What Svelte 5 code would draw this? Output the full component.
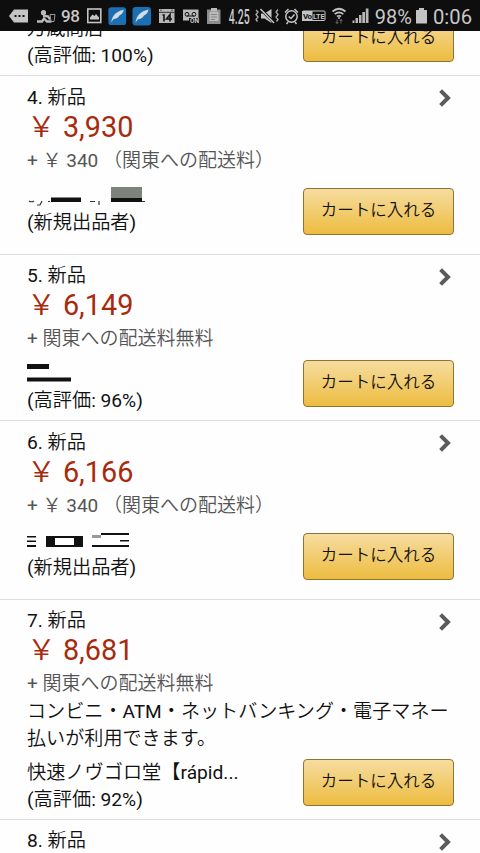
<script lang="ts">
  type Offer = {
    id: number;
    price: string;
    shipping: string;
    note?: string;
    seller?: string;
    mask?: "a" | "b" | "c";
    rating: string;
    fresh?: boolean;
  };

  const paid = "+ ￥ 340 （関東への配送料）";
  const free = "+ 関東への配送料無料";

  const offers: Offer[] = [
    { id: 4, price: "3,930", shipping: paid, mask: "a", rating: "(新規出品者)", fresh: true },
    { id: 5, price: "6,149", shipping: free, mask: "b", rating: "(高評価: 96%)" },
    { id: 6, price: "6,166", shipping: paid, mask: "c", rating: "(新規出品者)", fresh: true },
    {
      id: 7,
      price: "8,681",
      shipping: free,
      note: "コンビニ・ATM・ネットバンキング・電子マネー払いが利用できます。",
      seller: "快速ノヴゴロ堂【rápid...",
      rating: "(高評価: 92%)",
    },
  ];
</script>

{#snippet chevron()}
  <svg class="chevron" viewBox="0 0 14 20" width="14" height="20">
    <path d="M2.6 2.6 10 10 2.6 17.4" />
  </svg>
{/snippet}

{#snippet feather(x: number)}
  <svg viewBox="{x} 0 25 31">
    <rect x={x + 3.5} y="7" width="18.5" height="18.5" rx="3" fill="#1d6fb4" />
    <path d="M{x + 6.5} 22.500c1-6 4-11 13-13-.5 3-2 5-4.500 6-1 2.500-3.500 3.500-6 3.700z" fill="#d3dce3" />
  </svg>
{/snippet}

<div class="phone">
  <header class="status">
    <svg viewBox="0 0 33 31">
      <path d="M9 16l5-6.500h14v13H14z" fill="#c4c4c4" />
      <path d="M14.500 16h2M18.500 16h2M22.500 16h2" stroke="#111" stroke-width="2" />
    </svg>
    <svg viewBox="33 0 25 31">
      <circle cx="43.500" cy="12.700" r="2.600" fill="#bbb" />
      <path d="M37 21.500h5l2-3 3 3h4.500M43 16l5 .3 2 3" stroke="#bbb" stroke-width="2.300" fill="none" />
      <path d="M50 14.500h5l-1 7h-3z" fill="none" stroke="#999" />
    </svg>
    <svg viewBox="58 0 25 31"><text x="61" y="22" font-size="17" font-weight="500" textLength="19">98</text></svg>
    <svg viewBox="83 0 22 31">
      <rect x="87.800" y="9" width="13" height="13.500" fill="none" stroke="#c4c4c4" stroke-width="1.600" />
      <path d="M90 19.500v-2l2.500-3 2 1.500 1.500-2 3 3.500v2z" fill="#c4c4c4" />
    </svg>
    {@render feather(105)}
    {@render feather(129)}
    <svg viewBox="154 0 24 31">
      <path d="M159 9h15.500v14H159z" fill="#b8b8b8" />
      <path d="M161 9.500v1.500M172 9.500v1.500M159 12.300h15.500" stroke="#333" />
      <path d="M162.500 15h1.500v6.500M170 21.500v-7l-3.500 4.500h5.500" fill="none" stroke="#111" stroke-width="1.600" />
    </svg>
    <svg viewBox="178 0 25 31">
      <path d="M183 9.500h15.500v11H183z" fill="#b8b8b8" />
      <path d="M187 16h7" stroke="#111" />
      <circle cx="187" cy="14.300" r="1.900" fill="none" stroke="#111" />
      <circle cx="194" cy="14.300" r="1.900" fill="none" stroke="#111" />
      <path d="M189 18h10v5h-10z" fill="#111" />
      <text x="190" y="23" font-size="6.500" font-weight="700" textLength="9">ON</text>
    </svg>
    <svg viewBox="203 0 22 31">
      <path d="M207 9.500h13.500V24H207z" fill="#8d8d8d" />
      <path d="M209.500 12h9v9h-9z" fill="#bbb" />
      <path d="M211 8h6v3.500h-6z" fill="#bbb" />
      <path d="M211 14.500h6M211 17h6M211 19.500h4" stroke="#777" stroke-width=".8" />
    </svg>
    <svg viewBox="225 0 26 31">
      <text transform="translate(228.800 24) scale(.5 1)" font-size="21" font-weight="500">4.25</text>
    </svg>
    <svg viewBox="251 0 31 31">
      <path d="M261 13.500h3.500l7-4.500v14l-7-4.500H261z" fill="#c4c4c4" />
      <path d="M261 9.500l13 13" stroke="#111" stroke-width="3" />
      <path d="M260.500 9l13.500 14" stroke="#c4c4c4" stroke-width="1.500" />
      <path d="M256 10l2 2-2 2.500 2 2.500-2 2.500 1.500 2M278 9.500l-2 2.500 2 2.500-2 2.500 2 2.500-1.500 2" fill="none" stroke="#b0b0b0" stroke-width="1.300" />
    </svg>
    <svg viewBox="282 0 18 31">
      <circle cx="291.500" cy="16.500" r="5.700" fill="none" stroke="#c4c4c4" stroke-width="1.500" />
      <path d="M285 12.500l3.500-3.500M298 12.500l-3.500-3.500M288 22l-1.500 2M295 22l1.500 2M288.700 16.500l2.300 2 3.500-4" fill="none" stroke="#c4c4c4" stroke-width="1.500" />
    </svg>
    <svg viewBox="300 0 29 31">
      <path d="M302 11h10.500v10H302z" fill="#c4c4c4" />
      <rect x="302.500" y="11" width="22.500" height="9.500" rx="1" fill="none" stroke="#c4c4c4" />
      <text class="dark" x="303" y="18.800" font-size="8" font-weight="700" textLength="9">Vo</text>
      <text x="313" y="18.800" font-size="8" font-weight="700" textLength="11.500" lengthAdjust="spacingAndGlyphs">LTE</text>
    </svg>
    <svg viewBox="329 0 20 31">
      <path d="M332.500 11.500q6.500-5.500 13 0M334.700 14.200q4.300-3.500 8.600 0M337 16.500q2-1.500 4 0" fill="none" stroke="#c4c4c4" stroke-width="1.700" />
      <circle cx="339" cy="18" r="1" fill="#c4c4c4" />
      <path d="M337 19.500v4M335.700 22l1.300 1.500 1.300-1.500M341 23.500v-4M339.700 21l1.300-1.500 1.300 1.500" fill="none" stroke="#777" stroke-width=".9" />
    </svg>
    <svg viewBox="349 0 22 31">
      <path d="M352.500 20.500h2V23h-2zM355.500 18h2.500v5h-2.500zM359 15h2.500v8H359zM362.300 12h2.700v11h-2.700zM365.800 8.500h2.700V23h-2.700z" fill="#b8b8b8" />
    </svg>
    <svg viewBox="371 0 43 31"><text x="374.800" y="23.500" font-size="20" textLength="37" lengthAdjust="spacingAndGlyphs">98%</text></svg>
    <svg viewBox="414 0 16 31"><path d="M419 8h5v2h3v13.500h-11V10h3z" fill="#c4c4c4" /></svg>
    <svg viewBox="430 0 50 31"><text x="433" y="23.500" font-size="20.500" textLength="39" lengthAdjust="spacingAndGlyphs">0:06</text></svg>
  </header>

  <main>
    <section class="offer partial">
      <div class="footer">
        <div class="seller">
          <div>万蔵商店</div>
          <div>(高評価: 100%)</div>
        </div>
        <button>カートに入れる</button>
      </div>
    </section>

    {#each offers as offer (offer.id)}
      <section class="offer" class:fresh={offer.fresh}>
        <div class="title">{offer.id}. 新品{@render chevron()}</div>
        <div class="price">￥ {offer.price}</div>
        <div class="shipping">{offer.shipping}</div>
        {#if offer.note}<div class="note">{offer.note}</div>{/if}
        <div class="footer">
          <div class="seller">
            {#if offer.seller}
              <div>{offer.seller}</div>
            {:else}
              <svg class="mask" viewBox="0 0 130 27" width="130" height="27">
                {#if offer.mask === "a"}
                  <path d="M84 5h31v11H84z" fill="#7e827c" />
                  <path d="M24 15.500h30V20H24zM84 16h31v4H84z" />
                  <path d="M2 19q2.500 1.500 5 0M15 19l-2 4h-3M63 19.500h5M72 19v4M115 19.500h3M21 19.500h2" fill="none" stroke="#333" stroke-width="1.200" />
                {:else if offer.mask === "b"}
                  <path d="M0 4h22v5H0zM0 17.500h44v4H0z" />
                {:else}
                  <path d="M0 9h9v1.500H0zM0 13.500h9V15H0zM0 18h9v2H0zM19 9h37v11H19zM74 6h28v2H74zM65 18h37v2H65zM93 13h9v1.500h-9z" />
                  <path d="M28 11h19v7H28z" fill="#fff" />
                  <path d="M65 8h9v3h-9z" fill="#999" />
                {/if}
              </svg>
            {/if}
            <div>{offer.rating}</div>
          </div>
          <button>カートに入れる</button>
        </div>
      </section>
    {/each}

    <section class="offer">
      <div class="title">8. 新品{@render chevron()}</div>
    </section>
  </main>
</div>

<style>
  :global(body) {
    margin: 0;
    background: #fefefe;
  }

  .phone {
    width: 480px;
    height: 853px;
    overflow: hidden;
    display: flex;
    flex-direction: column;
    font-family: Roboto, "Noto Sans CJK JP DemiLight", "Noto Sans CJK JP Light", "Noto Sans CJK JP", sans-serif;
    font-size: 19.200px;
    line-height: 27px;
    color: #111;
  }

  .status {
    flex: none;
    height: 31px;
    background: #0e0e0e;
    display: grid;
    grid-template-columns: 33px 25px 25px 22px 24px 25px 24px 25px 22px 26px 31px 18px 29px 20px 22px 43px 16px 50px;
  }

  .status svg {
    display: block;
    width: 100%;
    height: 31px;
  }

  .status text {
    fill: #c8c8c8;
  }

  .status .dark {
    fill: #111;
  }

  main {
    flex: 1;
    min-height: 0;
    overflow: hidden;
  }

  .offer {
    display: flow-root;
    box-sizing: border-box;
    height: 166.5px;
    padding: 7.5px 27px 0;
    border-top: 1px solid #dedede;
  }

  .offer.fresh {
    height: 178.5px;
  }

  .offer:has(.note) {
    height: 220px;
  }

  .offer.partial {
    height: 44px;
    border: 0;
    padding-top: 0;
  }

  .partial .footer {
    margin-top: -16px;
  }

  .title {
    display: flex;
    justify-content: space-between;
    align-items: center;
  }

  .chevron {
    margin-right: 1px;
    position: relative;
    top: 1px;
  }

  .chevron path {
    fill: none;
    stroke: #5b5b5b;
    stroke-width: 4;
  }

  .price {
    font-size: 28.800px;
    line-height: 32px;
    color: #a82a0c;
  }

  .shipping {
    font-size: 19px;
    line-height: 35px;
    color: #555;
  }

  .note {
    width: 430px;
    font-size: 19.100px;
    position: relative;
    top: -3px;
  }

  .footer {
    display: flex;
    justify-content: space-between;
    align-items: flex-end;
    margin-top: 4px;
  }

  .seller {
    white-space: nowrap;
  }

  .mask {
    display: block;
    fill: #111;
  }

  button {
    box-sizing: border-box;
    width: 151px;
    height: 47px;
    margin: 0 -1px 7px 0;
    padding: 0 0 2px;
    border: 1px solid #8f7434;
    border-radius: 4px;
    background: linear-gradient(#f6dda0, #edbc40);
    font: inherit;
    font-size: 16.500px;
    color: #111;
  }

  .fresh button {
    margin-bottom: 1px;
  }
</style>
